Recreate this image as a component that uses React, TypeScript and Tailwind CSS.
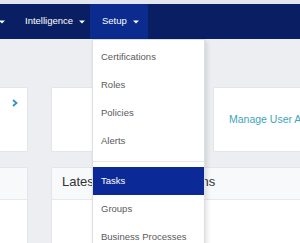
import React from "react";

const Caret = () => (
  <svg width="6" height="4" viewBox="0 0 6 4" className="ml-[6px] shrink-0">
    <path d="M0 0.5 L6 0.5 L3 3.5 Z" fill="#ffffff" />
  </svg>
);

const Item = ({ label, active }: { label: string; active?: boolean }) => (
  <div
    className={
      "h-[28px] flex items-center pl-[8px] text-[9.5px] " +
      (active ? "bg-[#0b2a98] text-white" : "text-[#5a5a5a]")
    }
  >
    {label}
  </div>
);

export default function App() {
  return (
    <div className="w-[300px] h-[243px] overflow-hidden relative bg-[#eceef2] font-['Liberation_Sans',Arial,sans-serif]">
      <div className="h-[4px] bg-[#e3e6ee]" />
      <nav className="h-[35px] bg-[#0a1f63] flex items-stretch text-white text-[9.5px] relative z-10">
        <div className="flex items-center -ml-[48px] w-[61px] pl-[3px] shrink-0">
          <span>Analytics</span>
          <Caret />
        </div>
        <div className="flex items-center pl-[12px] w-[77px] shrink-0">
          <span>Intelligence</span>
          <Caret />
        </div>
        <div className="relative flex items-center pl-[12px] w-[58px] bg-[#0b2b8e] shrink-0">
          <span>Setup</span>
          <Caret />
          <div className="absolute top-full left-[2px] w-[113px] bg-white border border-[#dcdfe5] shadow-[2px_2px_5px_rgba(0,0,0,0.12)] pt-[3px]">
            <Item label="Certifications" />
            <Item label="Roles" />
            <Item label="Policies" />
            <Item label="Alerts" />
            <div className="h-[12px] flex items-center">
              <div className="h-px w-full bg-[#e6e8ec]" />
            </div>
            <Item label="Tasks" active />
            <Item label="Groups" />
            <Item label="Business Processes" />
          </div>
        </div>
      </nav>
      <div className="pt-[48px] flex flex-col gap-[15px]">
        <div className="flex gap-[23px] -ml-[111px]">
          <div className="w-[139px] h-[65px] shrink-0 bg-white border border-[#e2e5ea] rounded-[2px] flex justify-end items-start pr-[9px] pt-[11px]">
            <svg width="6" height="8" viewBox="0 0 6 8">
              <path d="M1 1 L4.5 4 L1 7" stroke="#2f96ba" strokeWidth="1.8" fill="none" />
            </svg>
          </div>
          <div className="w-[139px] h-[65px] shrink-0 bg-white border border-[#e2e5ea] rounded-[2px]" />
          <div className="w-[139px] h-[65px] shrink-0 bg-white border border-[#e2e5ea] rounded-[2px] flex items-center pl-[15px] overflow-hidden whitespace-nowrap">
            <span className="text-[10.5px] text-[#3fa5bd]">Manage User Access</span>
          </div>
        </div>
        <div className="flex gap-[23px] -ml-[111px]">
          <div className="w-[139px] h-[100px] shrink-0 bg-white border border-[#e2e5ea] rounded-[2px]">
            <div className="h-[32px] bg-[#f8f9fb] border-b border-[#e6e8ec]" />
          </div>
          <div className="w-[300px] h-[100px] shrink-0 bg-white border border-[#e2e5ea] rounded-[2px]">
            <div className="h-[32px] bg-[#f8f9fb] border-b border-[#e6e8ec] flex items-center pl-[10px] pb-[3px] whitespace-nowrap">
              <span className="text-[13px] text-[#333333]">Latest Certification Actions</span>
            </div>
          </div>
        </div>
      </div>
    </div>
  );
}
